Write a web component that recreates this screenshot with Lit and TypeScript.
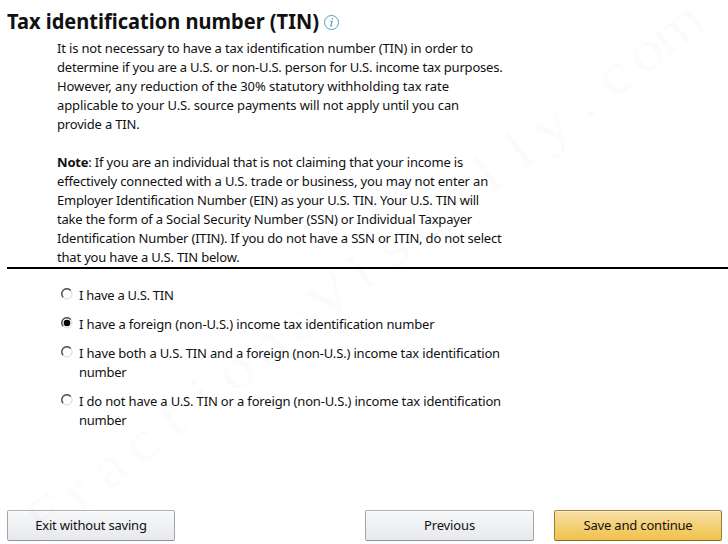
import { LitElement, html, css, svg } from "lit";
import { customElement, property } from "lit/decorators.js";

/** A single line of text that fills a given width, by letter spacing or by condensing its glyphs. */
@customElement("fit-line")
class FitLine extends LitElement {
  @property({ type: Number }) width = 0;
  @property({ type: Boolean }) condense = false;
  static styles = css`
    :host { display: block; white-space: nowrap; }
    span { display: inline-block; transform-origin: 0 50%; }
  `;
  render() {
    return html`<span><slot></slot></span>`;
  }
  async firstUpdated() {
    await document.fonts.ready;
    const span = this.renderRoot.querySelector("span")!;
    const count = (this.textContent ?? "").trim().length;
    const natural = span.getBoundingClientRect().width;
    if (!this.width || !count) return;
    if (this.condense) {
      this.style.width = this.width + "px";
      span.style.transform = `scaleX(${this.width / natural})`;
    } else {
      span.style.letterSpacing = (this.width - natural) / count + "px";
    }
  }
}

type Line = [string, number];

const intro: Line[] = [
  ["It is not necessary to have a tax identification number (TIN) in order to", 416],
  ["determine if you are a U.S. or non-U.S. person for U.S. income tax purposes.", 445.5],
  ["However, any reduction of the 30% statutory withholding tax rate", 392],
  ["applicable to your U.S. source payments will not apply until you can", 402],
  ["provide a TIN.", 82.5],
];

const note: Line[] = [
  [": If you are an individual that is not claiming that your income is", 406],
  ["effectively connected with a U.S. trade or business, you may not enter an", 431],
  ["Employer Identification Number (EIN) as your U.S. TIN. Your U.S. TIN will", 422],
  ["take the form of a Social Security Number (SSN) or Individual Taxpayer", 415],
  ["Identification Number (ITIN). If you do not have a SSN or ITIN, do not select", 444.5],
  ["that you have a U.S. TIN below.", 182.5],
];

const options: Line[][] = [
  [["I have a U.S. TIN", 94.5]],
  [["I have a foreign (non-U.S.) income tax identification number", 355.5]],
  [["I have both a U.S. TIN and a foreign (non-U.S.) income tax identification", 421], ["number", 47.5]],
  [["I do not have a U.S. TIN or a foreign (non-U.S.) income tax identification", 422], ["number", 47.5]],
];

const watermark = "FractionsVisually.com";

@customElement("app-root")
class AppRoot extends LitElement {
  static styles = css`
    :host {
      display: flex; flex-direction: column; position: relative; box-sizing: border-box;
      width: 728px; height: 544px; overflow: hidden; background: #fff; color: #111;
      padding: 6px 0 3px 7px;
      font: 13px/19px "Noto Sans", "Open Sans", sans-serif;
      font-variant-ligatures: common-ligatures;
    }
    .mark { position: absolute; left: 0; top: 0; overflow: visible; pointer-events: none; }
    .mark text { font: 56px "Liberation Serif", serif; fill: #000; fill-opacity: 0.014; text-anchor: middle; }
    h1 { margin: 0; display: flex; align-items: center; height: 30px; font-size: 21px; line-height: 30px; font-weight: 700; }
    .info { margin: 4px 0 0 5px; }
    .copy { padding: 3px 0 0 50px; height: 231px; box-sizing: border-box; }
    p { margin: 0 0 19px; }
    hr { margin: 0; border: 0; height: 2px; background: #000; flex: none; }
    .options { display: flex; flex-direction: column; gap: 10px; padding: 17px 0 0 54px; }
    .option { display: flex; gap: 6px; }
    .dot { flex: none; margin-top: 2px; }
    .bar { display: flex; margin-top: auto; padding-right: 6px; }
    .btn {
      box-sizing: border-box; height: 31px; width: 168px; padding: 0; display: flex; justify-content: center; align-items: center;
      border: 1px solid; border-color: #adb1b8 #a2a6ac #8d9096; border-radius: 2px;
      background: linear-gradient(#f7f8fa, #e7e9ec); font: inherit; color: #111;
      box-shadow: inset 0 1px 0 rgba(255, 255, 255, 0.6);
    }
    .prev { margin-left: 190px; width: 169px; }
    .save {
      margin-left: 20px; border-color: #a88734 #9c7e31 #846a29;
      background: linear-gradient(#f7dfa5, #f0c14b); box-shadow: inset 0 1px 0 rgba(255, 255, 255, 0.4);
    }
  `;

  private radio(checked: boolean) {
    return html`<svg class="dot" width="12" height="12" viewBox="0 0 12 12">
      <circle cx="6" cy="6" r="5" fill="#fff" stroke="#d9d6cf" />
      <path d="M2.1 9.3A5 5 0 0 1 9.8 2.4" fill="none" stroke="#555" stroke-width="1.5" />
      ${checked ? svg`<circle cx="6" cy="6" r="3.3" fill="#000" />` : ""}
    </svg>`;
  }

  render() {
    const xs = [...watermark].map((_, i) => (i * 33.25).toFixed(2)).join(" ");
    return html`
      <h1>
        <fit-line condense .width=${312}>Tax identification number (TIN)</fit-line>
        <svg class="info" width="16" height="16" viewBox="0 0 16 16" fill="none" stroke="#4f9fbd">
          <circle cx="7.5" cy="7.5" r="7" stroke-width="1" />
          <path d="M6.5 6.3H8L6.8 11h1.3" stroke-width="1.2" />
          <path d="M7.8 3.7H9" stroke-width="1.4" />
        </svg>
      </h1>
      <div class="copy">
        <p>${intro.map(([t, w]) => html`<fit-line .width=${w}>${t}</fit-line>`)}</p>
        <p>${note.map(([t, w], i) => html`<fit-line .width=${w}>${i ? "" : html`<b>Note</b>`}${t}</fit-line>`)}</p>
      </div>
      <hr />
      <div class="options">
        ${options.map((lines, i) => html`<label class="option">${this.radio(i === 1)}
          <span>${lines.map(([t, w]) => html`<fit-line .width=${w}>${t}</fit-line>`)}</span>
        </label>`)}
      </div>
      <div class="bar">
        <button class="btn"><fit-line .width=${111.5}>Exit without saving</fit-line></button>
        <button class="btn prev"><fit-line .width=${51}>Previous</fit-line></button>
        <button class="btn save"><fit-line .width=${109}>Save and continue</fit-line></button>
      </div>
      <svg class="mark" width="728" height="544">
        <text transform="translate(57 531) rotate(-37.8) scale(1.2 1)" x=${xs}>${watermark}</text>
      </svg>
    `;
  }
}
